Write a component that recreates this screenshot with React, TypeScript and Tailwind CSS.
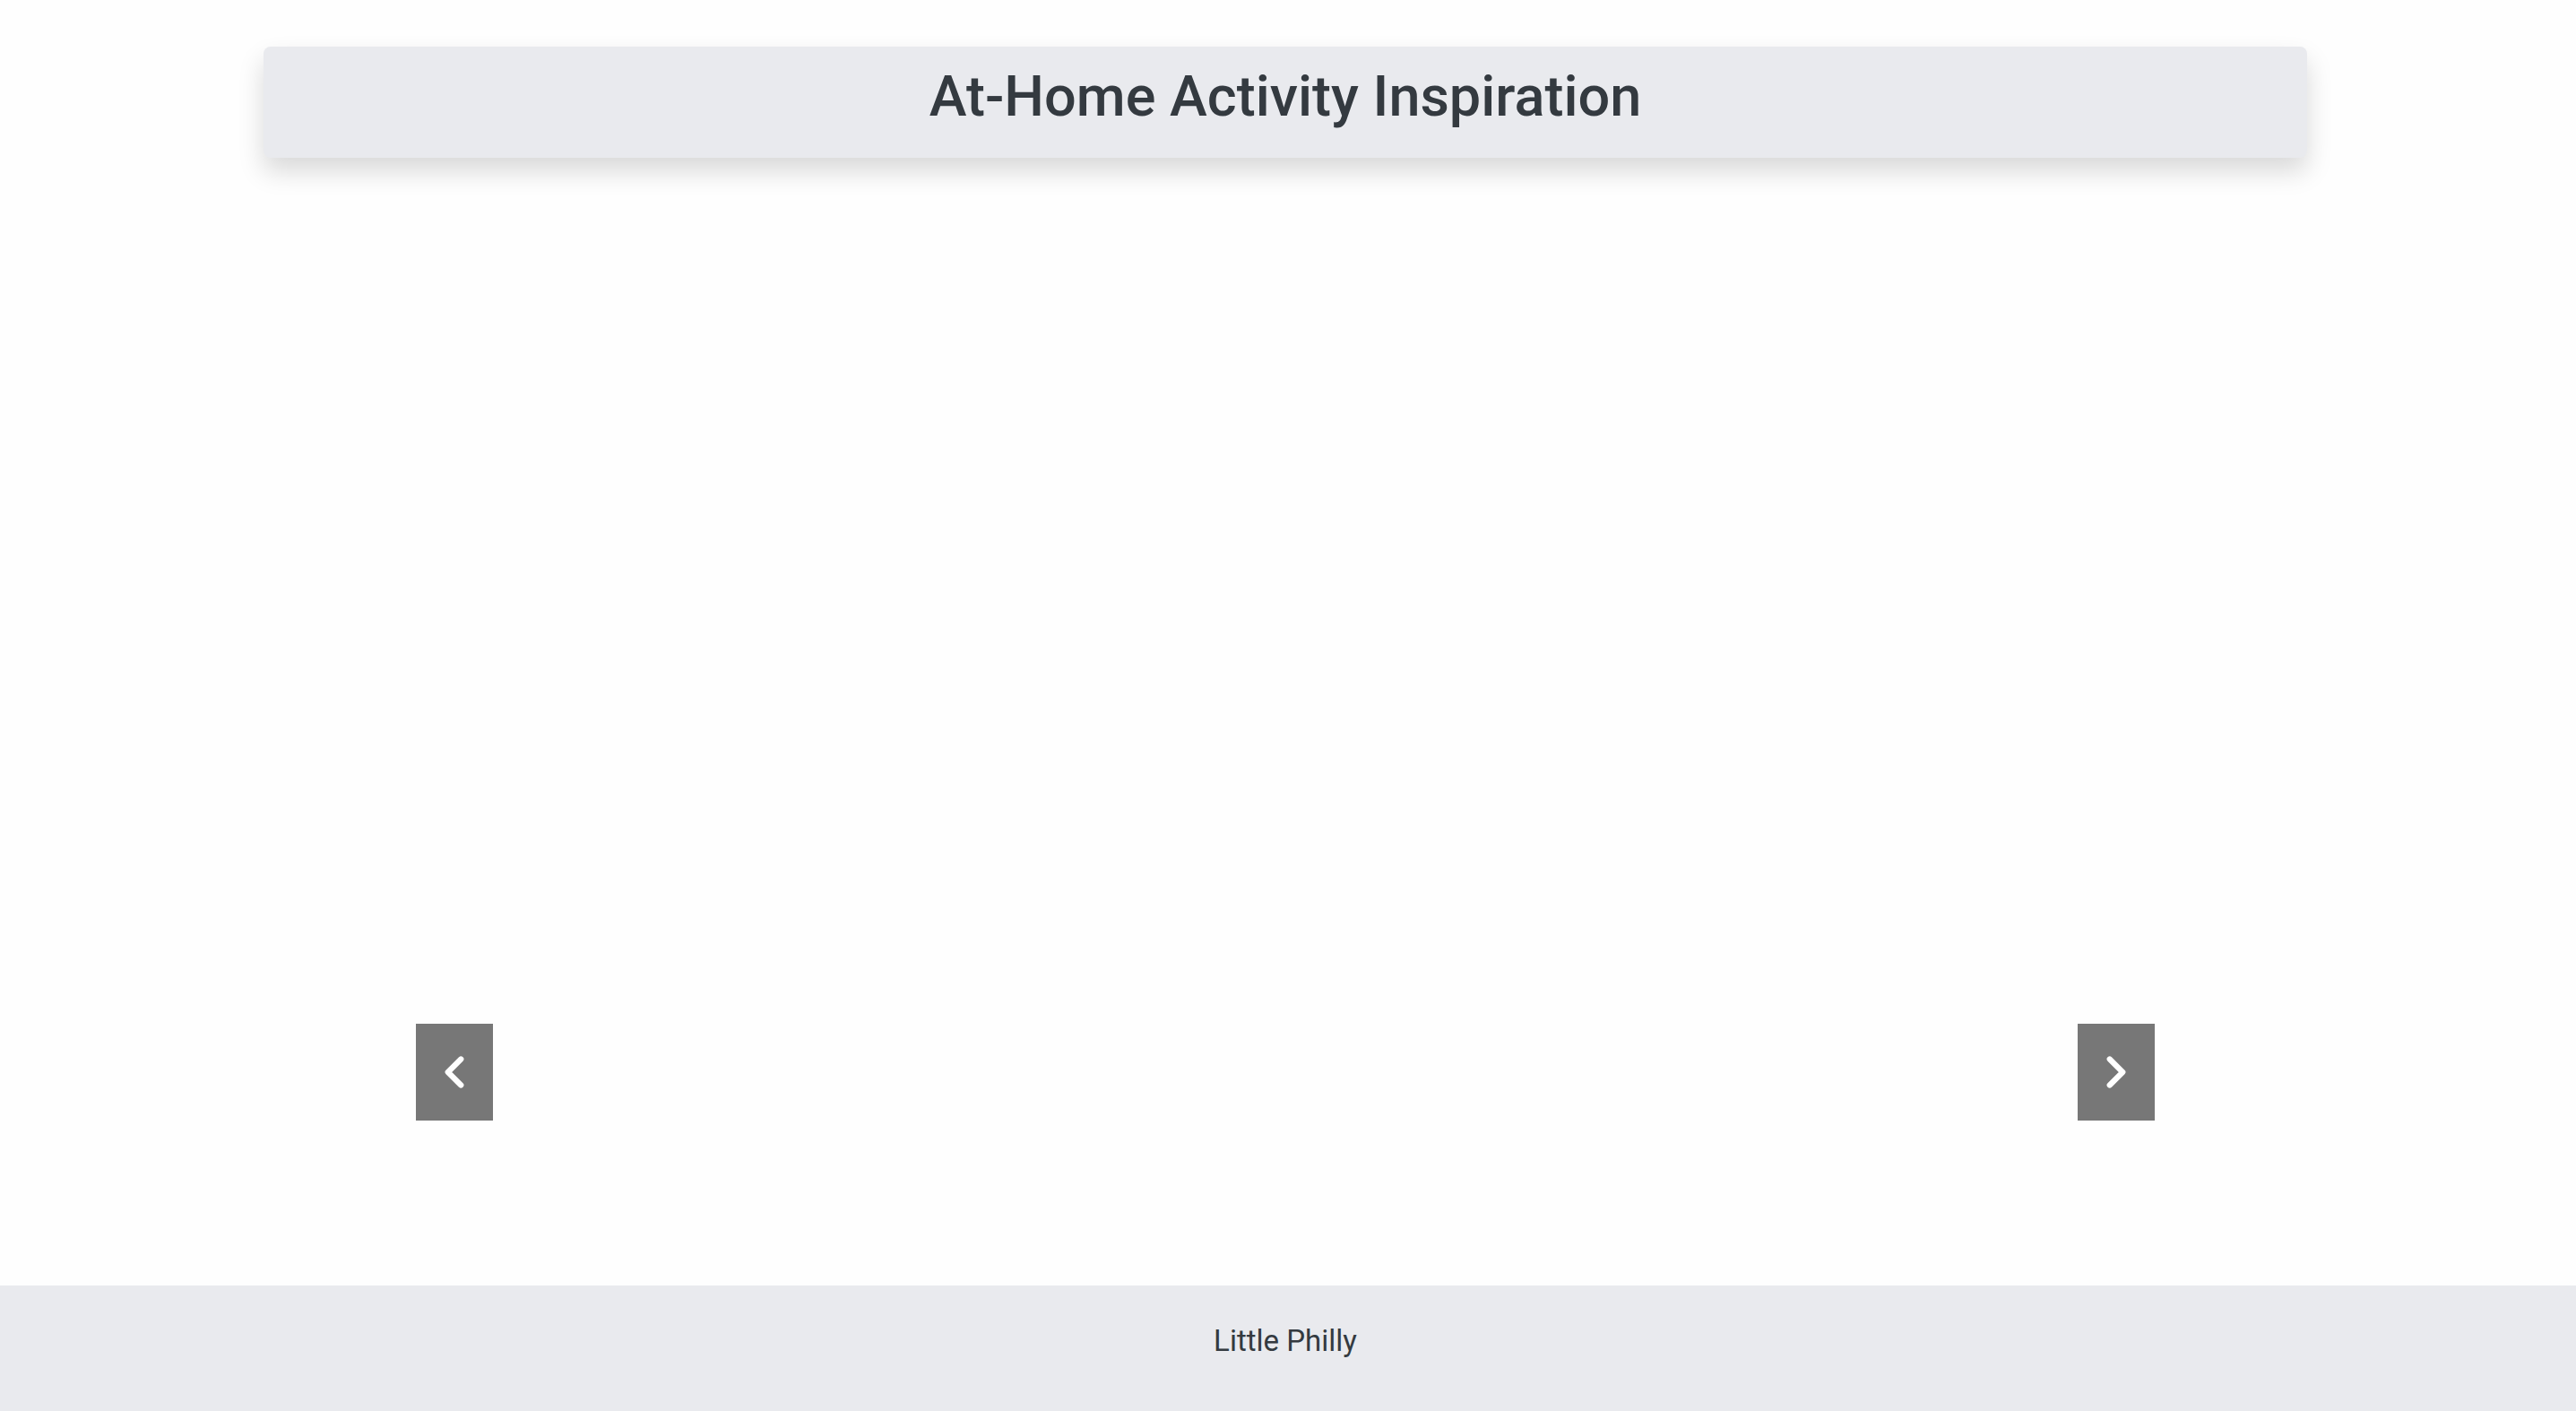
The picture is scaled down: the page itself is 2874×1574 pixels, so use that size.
export default function App() {
  return (
    <div className="min-h-screen flex flex-col bg-[#fefefe] font-['Roboto','Liberation_Sans',Arial,sans-serif] text-[#343a40]">
      {/* Title bar */}
      <header className="ml-[294px] mt-[52px] w-[2280px] h-[124px] rounded-[8px] bg-[#e9eaee] shadow-[0_15px_29px_rgba(0,0,0,0.15)] pt-[24px]">
        <h1 className="text-center text-[63px] leading-[64px] font-medium">At-Home Activity Inspiration</h1>
      </header>

      {/* Carousel */}
      <main className="flex-1 flex flex-col justify-end pb-[184px]">
        <div className="ml-[464px] w-[1940px] flex items-center justify-between">
          <button className="w-[86px] h-[108px] bg-[#777777] flex items-center justify-center">
            <svg width="58" height="58" viewBox="0 0 24 24" fill="none" stroke="white" strokeWidth="2.6" strokeLinecap="round" strokeLinejoin="round">
              <path d="m15 18-6-6 6-6" />
            </svg>
          </button>
          <button className="w-[86px] h-[108px] bg-[#777777] flex items-center justify-center">
            <svg width="58" height="58" viewBox="0 0 24 24" fill="none" stroke="white" strokeWidth="2.6" strokeLinecap="round" strokeLinejoin="round">
              <path d="m9 18 6-6-6-6" />
            </svg>
          </button>
        </div>
      </main>

      <footer className="h-[140px] bg-[#e9eaee] flex items-center justify-center pb-[16px] pr-[6px]">
        <p className="text-[33px]">Little Philly</p>
      </footer>
    </div>
  );
}
